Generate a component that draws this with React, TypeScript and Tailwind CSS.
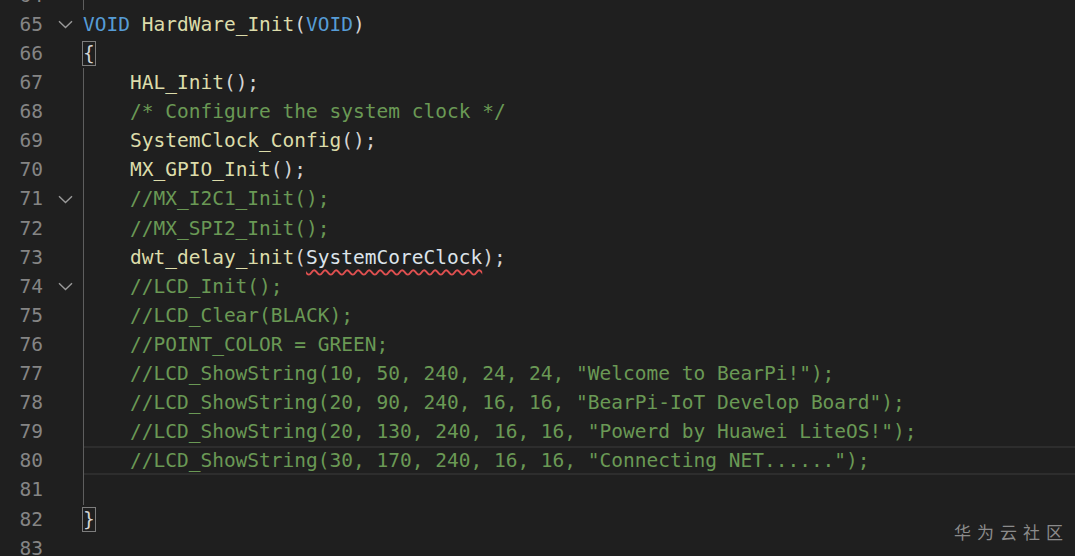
import React from 'react';

type Tok = { t: string; c?: string; squiggle?: boolean };
type Line = {
  n: number;
  toks: Tok[];
  fold?: boolean;
  guide?: boolean;
  brace?: string;
  active?: boolean;
};

const KW = 'text-[#569cd6]';
const FN = 'text-[#dcdcaa]';
const CM = 'text-[#6a9955]';
const PN = 'text-[#d4d4d4]';

const lines: Line[] = [
  { n: 64, toks: [], guide: true },
  {
    n: 65,
    fold: true,
    toks: [
      { t: 'VOID', c: KW },
      { t: ' ' },
      { t: 'HardWare_Init', c: FN },
      { t: '(', c: PN },
      { t: 'VOID', c: KW },
      { t: ')', c: PN },
    ],
  },
  { n: 66, toks: [], brace: '{' },
  { n: 67, guide: true, toks: [{ t: '    ' }, { t: 'HAL_Init', c: FN }, { t: '();', c: PN }] },
  { n: 68, guide: true, toks: [{ t: '    /* Configure the system clock */', c: CM }] },
  { n: 69, guide: true, toks: [{ t: '    ' }, { t: 'SystemClock_Config', c: FN }, { t: '();', c: PN }] },
  { n: 70, guide: true, toks: [{ t: '    ' }, { t: 'MX_GPIO_Init', c: FN }, { t: '();', c: PN }] },
  { n: 71, guide: true, fold: true, toks: [{ t: '    //MX_I2C1_Init();', c: CM }] },
  { n: 72, guide: true, toks: [{ t: '    //MX_SPI2_Init();', c: CM }] },
  {
    n: 73,
    guide: true,
    toks: [
      { t: '    ' },
      { t: 'dwt_delay_init', c: FN },
      { t: '(', c: PN },
      { t: 'SystemCoreClock', c: 'text-[#dce3ea]', squiggle: true },
      { t: ');', c: PN },
    ],
  },
  { n: 74, guide: true, fold: true, toks: [{ t: '    //LCD_Init();', c: CM }] },
  { n: 75, guide: true, toks: [{ t: '    //LCD_Clear(BLACK);', c: CM }] },
  { n: 76, guide: true, toks: [{ t: '    //POINT_COLOR = GREEN;', c: CM }] },
  { n: 77, guide: true, toks: [{ t: '    //LCD_ShowString(10, 50, 240, 24, 24, "Welcome to BearPi!");', c: CM }] },
  { n: 78, guide: true, toks: [{ t: '    //LCD_ShowString(20, 90, 240, 16, 16, "BearPi-IoT Develop Board");', c: CM }] },
  { n: 79, guide: true, toks: [{ t: '    //LCD_ShowString(20, 130, 240, 16, 16, "Powerd by Huawei LiteOS!");', c: CM }] },
  {
    n: 80,
    guide: true,
    active: true,
    toks: [{ t: '    //LCD_ShowString(30, 170, 240, 16, 16, "Connecting NET......");', c: CM }],
  },
  { n: 81, guide: true, toks: [] },
  { n: 82, toks: [], brace: '}' },
  { n: 83, toks: [] },
];

const Chevron = () => (
  <svg width="15" height="9" viewBox="0 0 15 9" fill="none">
    <path d="M1 1.2 L7.5 7.5 L14 1.2" stroke="#9a9a9a" strokeWidth="1.4" />
  </svg>
);

function codeCellClass(l: Line) {
  if (l.active) {
    return 'flex-1 h-full whitespace-pre shadow-[inset_1px_0_0_#5e5e5e,inset_0_2px_0_#2d2d2d,inset_0_-2px_0_#2d2d2d]';
  }
  if (l.guide) return 'flex-1 h-full whitespace-pre shadow-[inset_1px_0_0_#5e5e5e]';
  return 'flex-1 h-full whitespace-pre';
}

export default function App() {
  return (
    <div
      className="relative w-[1075px] h-[556px] overflow-hidden bg-[#1f1f1f] text-[19.5px] leading-[29.1px] text-[#d4d4d4]"
      style={{ fontFamily: '"DejaVu Sans Mono", "Liberation Mono", monospace' }}
    >
      <div className="-mt-[19.2px] flex flex-col">
        {lines.map(l => (
          <div key={l.n} className="flex h-[29.1px] items-center">
            <div className="w-[43px] text-right text-[#858585]">{l.n}</div>
            <div className="w-[40px] h-full flex items-center pl-[15px]">{l.fold && <Chevron />}</div>
            <div className={codeCellClass(l)}>
              {l.brace && (
                <span className="inline-block leading-[23px] outline outline-[#7d7d7d] text-[#d4d4d4]">
                  {l.brace}
                </span>
              )}
              {l.toks.map((tk, i) => (
                <span
                  key={i}
                  className={
                    (tk.c ?? '') +
                    (tk.squiggle
                      ? ' underline decoration-wavy decoration-[#e05050] decoration-[1.5px] underline-offset-[5px]'
                      : '')
                  }
                >
                  {tk.t}
                </span>
              ))}
            </div>
          </div>
        ))}
      </div>
      <div
        className="absolute right-[6px] bottom-[16px] text-[17px] leading-none tracking-[6px] text-[#8b8b8b]"
        style={{ fontFamily: '"Noto Sans CJK SC", sans-serif' }}
      >
        华为云社区
      </div>
    </div>
  );
}
